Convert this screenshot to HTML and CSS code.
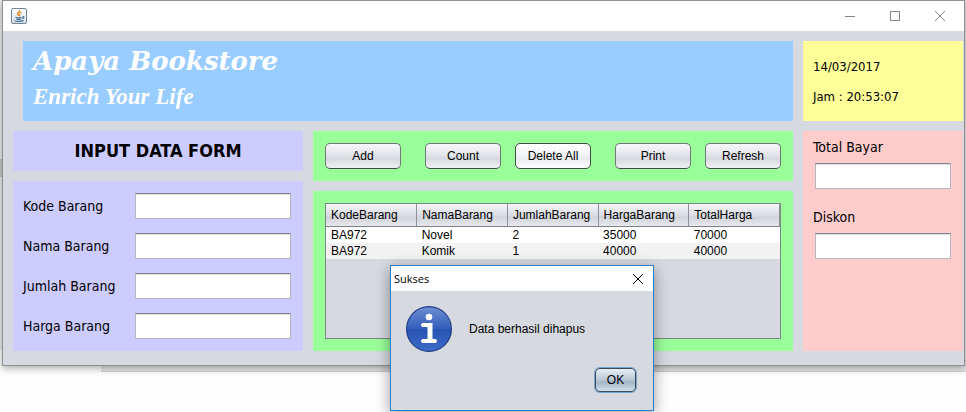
FILE: index.html
```html
<!DOCTYPE html>
<html lang="id">
<head>
<meta charset="utf-8">
<title>Apaya Bookstore</title>
<link rel="stylesheet" href="styles.css">
</head>
<body>
<div class="desktop">
  <div class="window">
    <div class="titlebar">
      <svg class="java" width="16" height="16" viewBox="0 0 16 16" aria-hidden="true">
        <defs><linearGradient id="tile" x1="0" y1="0" x2="0" y2="1"><stop offset="0" stop-color="#fff"/><stop offset="1" stop-color="#d5dee6"/></linearGradient></defs>
        <rect x=".5" y=".5" width="15" height="15" rx="1.5" fill="url(#tile)" stroke="#6d8496"/>
        <path d="M8.6 1.8c1.2 1.7-2.8 2.6-2.2 4.2.2.8 1 1.2 1.3 2M10.5 4c-2.2.9-2.8 1.7-1.9 2.7.4.5.1 1-.4 1.5" fill="none" stroke="#e58a35" stroke-width="1.3"/>
        <path d="M4.5 9.2c1.5.7 4.6.7 6.2 0M5.3 11c1.3.5 3.6.5 4.9 0M11.4 8.6c2-.4 2 1.5-.3 2.2M3.3 12.7c2.3 1 7.2 1 9.3-.2" fill="none" stroke="#47708f" stroke-width="1.2"/>
      </svg>
      <div class="controls">
        <button aria-label="Minimize"><svg width="12" height="12" viewBox="0 0 12 12"><path d="M1 6.5h10"/></svg></button>
        <button aria-label="Maximize"><svg width="12" height="12" viewBox="0 0 12 12"><path d="M1.500 1.500h9v9h-9z"/></svg></button>
        <button aria-label="Close"><svg width="12" height="12" viewBox="0 0 12 12"><path d="M1 1l10 10M11 1L1 11"/></svg></button>
      </div>
    </div>
    <main class="content">
      <header class="banner">
        <h1>Apaya Bookstore</h1>
        <p>Enrich Your Life</p>
      </header>
      <section class="clock">
        <time>14/03/2017</time>
        <span>Jam : 20:53:07</span>
      </section>
      <div class="stack">
        <h2 class="heading">INPUT DATA FORM</h2>
        <form class="form">
          <div class="row"><label for="kode">Kode Barang</label><input id="kode" type="text"></div>
          <div class="row"><label for="nama">Nama Barang</label><input id="nama" type="text"></div>
          <div class="row"><label for="jumlah">Jumlah Barang</label><input id="jumlah" type="text"></div>
          <div class="row"><label for="harga">Harga Barang</label><input id="harga" type="text"></div>
        </form>
      </div>
      <div class="stack">
        <div class="toolbar">
          <button class="btn">Add</button>
          <div class="group"><button class="btn">Count</button><button class="btn btn-light">Delete All</button></div>
          <div class="group"><button class="btn">Print</button><button class="btn">Refresh</button></div>
        </div>
        <section class="list">
          <div class="scroll">
            <table>
              <thead><tr><th>KodeBarang</th><th>NamaBarang</th><th>JumlahBarang</th><th>HargaBarang</th><th>TotalHarga</th></tr></thead>
              <tbody>
                <tr><td>BA972</td><td>Novel</td><td>2</td><td>35000</td><td>70000</td></tr>
                <tr><td>BA972</td><td>Komik</td><td>1</td><td>40000</td><td>40000</td></tr>
              </tbody>
            </table>
          </div>
        </section>
      </div>
      <section class="totals">
        <div class="field"><label for="total">Total Bayar</label><input id="total" type="text"></div>
        <div class="field"><label for="diskon">Diskon</label><input id="diskon" type="text"></div>
      </section>
    </main>
  </div>
  <div class="dialog" role="dialog" aria-labelledby="dialog-title">
    <div class="dialog-bar">
      <span id="dialog-title">Sukses</span>
      <button aria-label="Close"><svg width="12" height="12" viewBox="0 0 12 12"><path d="M1 1l10 10M11 1L1 11"/></svg></button>
    </div>
    <div class="message">
      <svg width="46" height="46" viewBox="0 0 46 46" aria-hidden="true">
        <defs><linearGradient id="ball" x1="0" y1="0" x2="0" y2="1"><stop offset="0" stop-color="#6d8fd2"/><stop offset=".48" stop-color="#3560bb"/><stop offset=".52" stop-color="#2953b3"/><stop offset="1" stop-color="#3d6cc9"/></linearGradient></defs>
        <circle cx="23" cy="23" r="22.4" fill="url(#ball)" stroke="#223e87" stroke-width="1.2"/>
        <circle cx="23" cy="11" r="3.3" fill="#fff"/>
        <path d="M17 17h9.5V33H29q2 0 2 2T29 37H17q-2 0-2-2t2-2h4.5V21H17q-2 0-2-2t2-2z" fill="#fff"/>
      </svg>
      <p>Data berhasil dihapus</p>
    </div>
    <div class="actions"><button class="btn ok">OK</button></div>
  </div>
</div>
</body>
</html>
```
FILE: styles.css
```css
* { box-sizing: border-box; }

body {
  margin: 0;
  background: #fefefe;
  color: #000;
  font: 12px/16px "Liberation Sans", Arial, sans-serif;
}

h1, h2, p { margin: 0; }

.desktop {
  position: relative;
  min-height: 100vh;
  padding: 0 1px 0 2px;
  overflow: hidden;
  background:
    linear-gradient(#d2d2d2, #d2d2d2) 101px 371px / 100% 1px no-repeat,
    linear-gradient(#e6e6e6, #e6e6e6) 101px 0 / 100% 371px no-repeat,
    linear-gradient(#c8c8c8, #c8c8c8) 0 159px / 3px 18px no-repeat,
    linear-gradient(#eeeef0, #eeeef0) 0 0 / 3px 350px no-repeat;
}

.window {
  border: 1px solid #8e9092;
  background: #d6d9df;
  box-shadow: 0 2px 8px rgba(0, 0, 0, 0.35);
}

.titlebar {
  display: flex;
  align-items: center;
  justify-content: space-between;
  height: 30px;
  padding: 0 18px 0 8px;
  background: #fff;
}

.controls { display: flex; gap: 33px; }

.controls button, .dialog-bar button {
  display: flex;
  padding: 0;
  border: 0;
  background: none;
}

.controls path { fill: none; stroke: #858585; }
.dialog-bar path { fill: none; stroke: #000; }

.content {
  display: grid;
  grid-template-columns: 290px 1fr 160px;
  gap: 10px;
  padding: 10px 1px 14px 10px;
}

.banner {
  grid-column: span 2;
  height: 80px;
  margin-left: 10px;
  padding: 4px 10px;
  background: #99ccff;
  color: #fff;
}

.banner h1 {
  font: italic bold 26px/32px "DejaVu Serif", serif;
}

.banner p {
  font: italic bold 23px/40px "Liberation Serif", serif;
}

.clock {
  display: flex;
  flex-direction: column;
  gap: 14px;
  padding: 18px 10px 16px;
  background: #ffff99;
  font: 13px/16px "DejaVu Sans Condensed", "DejaVu Sans", sans-serif;
}

.stack { display: flex; flex-direction: column; gap: 10px; }

.heading {
  background: #ccccff;
  font: bold 18px/40px "DejaVu Sans Condensed", "DejaVu Sans", sans-serif;
  text-align: center;
}

.form {
  display: flex;
  flex-direction: column;
  gap: 14px;
  padding: 12px 12px 12px 10px;
  background: #ccccff;
}

.row { display: flex; align-items: center; justify-content: space-between; }

label { font: 14px/20px "DejaVu Sans Condensed", "DejaVu Sans", sans-serif; }

input {
  height: 26px;
  border: 1px solid #b5b7be;
  border-top-color: #83858c;
  background: #fff;
  box-shadow: inset 0 1px #dcdde0;
  font: inherit;
}

.row input { width: 156px; }

.toolbar {
  display: flex;
  justify-content: space-between;
  padding: 12px;
  background: #99ff99;
}

.group { display: flex; gap: 14px; }

.btn {
  width: 76px;
  height: 26px;
  padding: 0;
  border: 1px solid #72747b;
  border-bottom-color: #45474c;
  border-radius: 5px;
  background: linear-gradient(#f8f8fa, #e3e5e9 45%, #d5d8de 60%, #eff0f4);
  color: #000;
  font: inherit;
}

.btn-light {
  border-color: #45474c;
  background: linear-gradient(#fff, #f3f4f6 45%, #e9ebf0 60%, #fff);
}

.list {
  display: flex;
  flex: 1;
  padding: 12px;
  background: #99ff99;
}

.scroll {
  flex: 1;
  border: 1px solid #7f8289;
  background: #d6d9df;
}

table { width: 100%; border-collapse: collapse; table-layout: fixed; }

th, td {
  height: 16px;
  padding: 0 0 0 5px;
  line-height: 16px;
  font-weight: normal;
  text-align: left;
  white-space: nowrap;
}

th {
  height: 22px;
  border-right: 1px solid #8f9299;
  border-bottom: 1px solid #7f8289;
  background: linear-gradient(#f4f5f7, #dadde3 50%, #d0d3da 60%, #e6e8ec);
}

tbody tr { background: #fff; }
tbody tr:nth-child(even) { background: #f2f2f2; }

.totals {
  display: flex;
  flex-direction: column;
  gap: 18px;
  padding: 6px 12px 6px 10px;
  background: #ffcccc;
}

.field { display: flex; flex-direction: column; gap: 6px; }
.field input { width: 136px; align-self: flex-end; }

.dialog {
  position: absolute;
  top: 265px;
  left: 390px;
  width: 264px;
  border: 1px solid #2a7fc9;
  background: #d6d9df;
  box-shadow: 0 4px 14px rgba(0, 0, 0, 0.4);
}

.dialog-bar {
  display: flex;
  align-items: center;
  justify-content: space-between;
  height: 25px;
  padding: 0 9px 0 3px;
  background: #fff;
  font: 11px/16px "Open Sans", sans-serif;
}

.message {
  display: flex;
  align-items: center;
  gap: 17px;
  padding: 15px 15px 16px;
}

.actions {
  display: flex;
  justify-content: flex-end;
  padding: 0 17px 18px;
}

.ok {
  width: 41px;
  height: 24px;
  border-color: #3d4a5a;
  background: linear-gradient(#e9eef3, #bccbd8 45%, #a5b8c9 60%, #cfdfec);
  box-shadow: 0 0 0 1px #73a4d1;
}
```
